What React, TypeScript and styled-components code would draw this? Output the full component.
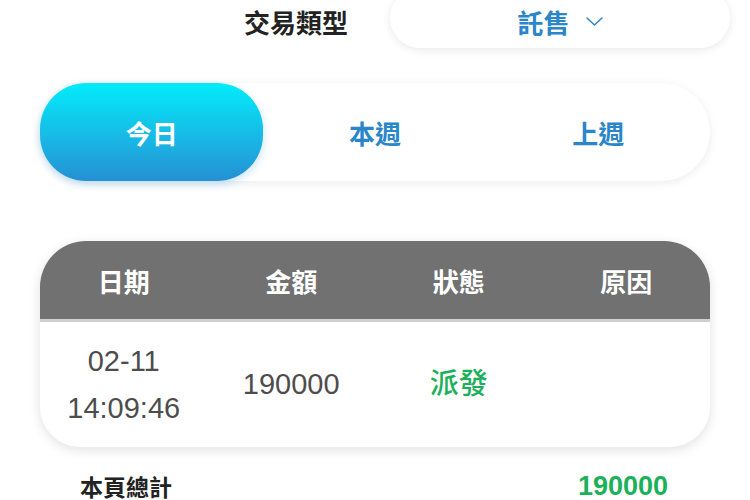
import React from 'react';
import styled, { createGlobalStyle } from 'styled-components';

const GlobalStyle = createGlobalStyle`
    body {
        margin: 0;
        background: #ffffff;
        font-family: "Liberation Sans", "Noto Sans CJK TC", sans-serif;
    }
`;

const BLUE = '#2a86c9';
const GREEN = '#1bb15a';

const tabs = ['今日', '本週', '上週'];
const columns = ['日期', '金額', '狀態', '原因'];

export default function App() {
    return (
        <>
            <GlobalStyle />
            <Page>
                <TopRow>
                    <Label>交易類型</Label>
                    <Select>
                        <SelectText>託售</SelectText>
                        <svg width='17' height='9' viewBox='0 0 17 9' fill='none'>
                            <path d='M1 1 L8.5 8 L16 1' stroke={BLUE} strokeWidth='1.5' strokeLinecap='round' strokeLinejoin='round' />
                        </svg>
                    </Select>
                </TopRow>

                <TabBar>
                    {tabs.map((t, i) => (
                        <Tab key={t} $active={i === 0}>{t}</Tab>
                    ))}
                </TabBar>

                <Card>
                    <HeadRow>
                        {columns.map(c => <HeadCell key={c}>{c}</HeadCell>)}
                    </HeadRow>
                    <BodyRow>
                        <Cell>02-11<br />14:09:46</Cell>
                        <Cell>190000</Cell>
                        <Cell $color={GREEN}>派發</Cell>
                        <Cell></Cell>
                    </BodyRow>
                </Card>

                <Footer>
                    <FooterLabel>本頁總計</FooterLabel>
                    <FooterValue>190000</FooterValue>
                </Footer>
            </Page>
        </>
    );
}

const Page = styled.div`
    width: 750px;
    height: 500px;
    overflow: hidden;
    display: flex;
    flex-direction: column;

    & > * {
        flex-shrink: 0;
    }
`;

const TopRow = styled.div`
    display: flex;
    align-items: center;
    justify-content: flex-end;
    gap: 42px;
    padding-right: 20px;
    margin-top: -12px;
    height: 60px;
`;

const Label = styled.span`
    font-size: 26px;
    font-weight: 700;
    color: #222;
    padding-top: 6px;
`;

const Select = styled.div`
    width: 340px;
    height: 60px;
    border-radius: 30px;
    background: #fff;
    box-shadow: 0 2px 10px rgba(0, 0, 0, 0.09);
    display: flex;
    align-items: center;
    justify-content: center;
    gap: 16px;
    padding-top: 6px;
    box-sizing: border-box;
`;

const SelectText = styled.span`
    font-size: 26px;
    font-weight: 700;
    color: ${BLUE};
`;

const TabBar = styled.div`
    margin: 35px 40px 0;
    height: 98px;
    border-radius: 49px;
    background: #fff;
    box-shadow: 0 2px 10px rgba(0, 0, 0, 0.08);
    display: grid;
    grid-template-columns: repeat(3, 1fr);
`;

const Tab = styled.div<{ $active?: boolean }>`
    display: flex;
    align-items: center;
    justify-content: center;
    border-radius: 46px;
    font-size: 26px;
    font-weight: 700;
    color: ${p => (p.$active ? '#fff' : BLUE)};
    background: ${p => (p.$active ? 'linear-gradient(180deg, #02ecfa 0%, #18b9e6 55%, #2590d3 100%)' : 'transparent')};
    box-shadow: ${p => (p.$active ? '0 3px 8px rgba(20, 140, 210, 0.25)' : 'none')};
`;

const Card = styled.div`
    margin: 60px 40px 0;
    border-radius: 46px 46px 40px 40px;
    background: #fff;
    box-shadow: 0 3px 12px rgba(0, 0, 0, 0.12);
    overflow: hidden;
`;

const HeadRow = styled.div`
    display: grid;
    grid-template-columns: repeat(4, 1fr);
    height: 78px;
    background: #717171;
    border-bottom: 3px solid #d0d0d0;
`;

const HeadCell = styled.div`
    display: flex;
    align-items: center;
    justify-content: center;
    color: #fff;
    font-size: 26px;
    font-weight: 700;
`;

const BodyRow = styled.div`
    display: grid;
    grid-template-columns: repeat(4, 1fr);
    height: 125px;
`;

const Cell = styled.div<{ $color?: string }>`
    display: flex;
    align-items: center;
    justify-content: center;
    text-align: center;
    font-size: 29px;
    font-weight: 500;
    line-height: 47px;
    color: ${p => p.$color || '#4d4d4d'};
`;

const Footer = styled.div`
    display: flex;
    align-items: center;
    justify-content: space-between;
    margin: 0 82px 0 80px;
    height: 78px;
`;

const FooterLabel = styled.span`
    font-size: 23px;
    font-weight: 700;
    color: #222;
`;

const FooterValue = styled.span`
    font-size: 27px;
    font-weight: 700;
    color: ${GREEN};
`;
